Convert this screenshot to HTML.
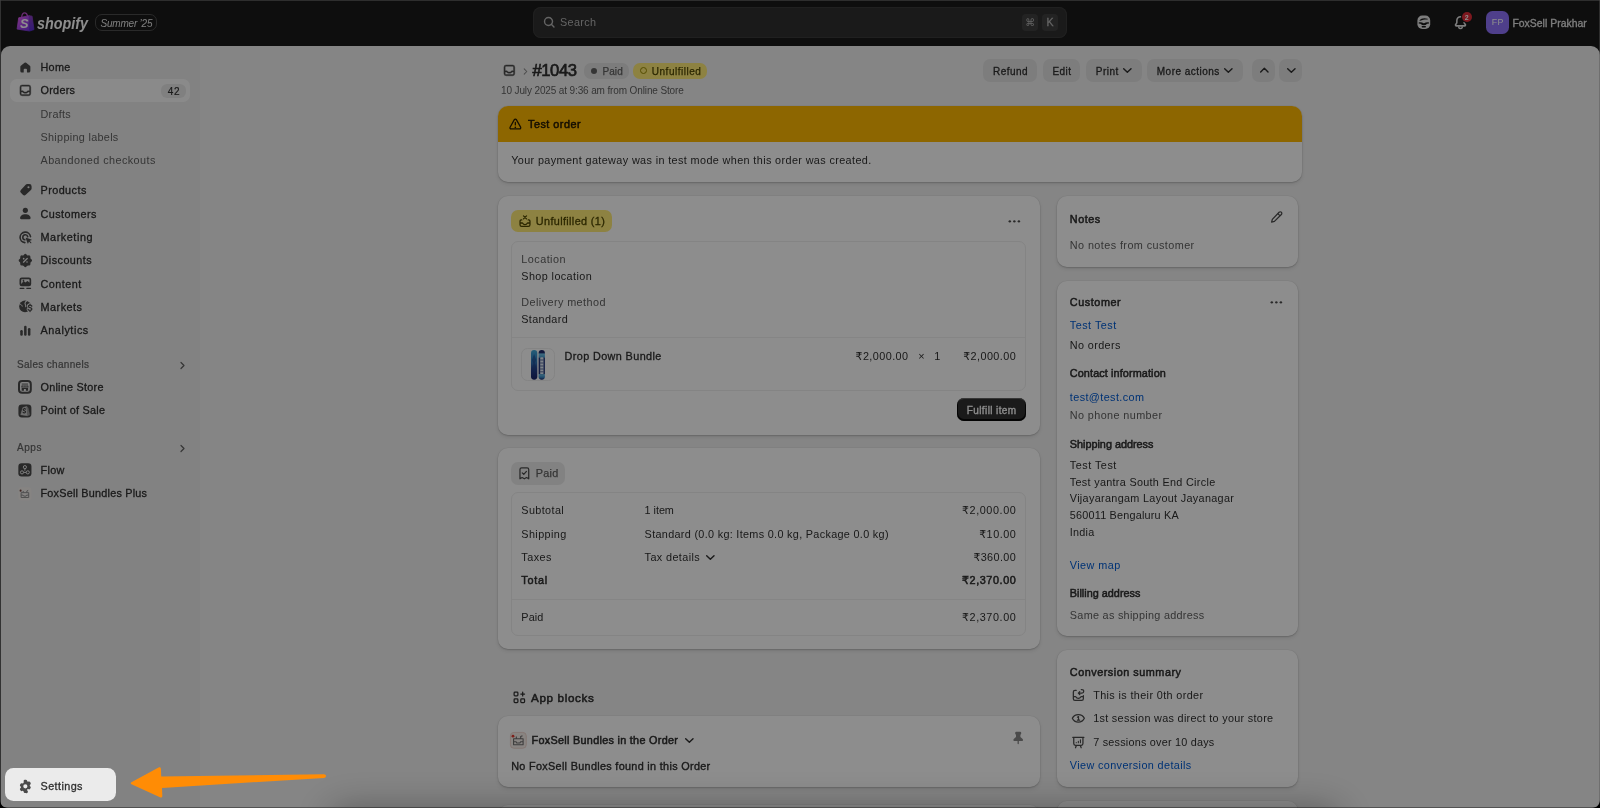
<!DOCTYPE html>
<html lang="en"><head><meta charset="utf-8"><title>Orders · #1043 · Shopify</title>
<style>
html,body{margin:0;padding:0;}
body{width:1600px;height:808px;overflow:hidden;position:relative;background:#1a1a1a;font-family:"Liberation Sans","DejaVu Sans",sans-serif;-webkit-font-smoothing:antialiased;}
.b{position:absolute;}
.ic{position:absolute;display:block;overflow:visible;}
.t{position:absolute;white-space:nowrap;line-height:1.1;}
.ov{position:absolute;left:0;top:0;width:1600px;height:808px;background:rgba(0,0,0,.447);}
#L{position:absolute;left:0;top:0;width:1600px;height:808px;will-change:transform;}
</style></head><body><div id="L">
<div class="b" style="left:0px;top:0px;width:1600px;height:47px;background:#1a1a1a;"></div>
<div class="b" style="left:1px;top:46px;width:199px;height:762px;background:#ebebeb;border-radius:9px 0 0 0;"></div>
<div class="b" style="left:200px;top:46px;width:1399.5px;height:762px;background:#f1f1f1;border-radius:0 9px 0 0;"></div>
<svg class="ic" style="left:12px;top:8px" width="28" height="28" viewBox="12 8 28 28">
<defs><linearGradient id="bg1" x1="0" y1="0" x2="1" y2="1"><stop offset="0" stop-color="#f064f8"/><stop offset=".55" stop-color="#a345ea"/><stop offset="1" stop-color="#7434e2"/></linearGradient>
<linearGradient id="bg2" x1="0" y1="0" x2="0" y2="1"><stop offset="0" stop-color="#8a3fc0"/><stop offset="1" stop-color="#5a2fd6"/></linearGradient></defs>
<path d="M21.700 17.200c.2-2.600 1.500-4.300 3-4.300 1.400 0 2.500 1.300 2.800 3.300" fill="none" stroke="#c050d0" stroke-width="1.300" stroke-linecap="round"/>
<path d="M18.700 17.800 29.300 15.700 29.600 31 17.100 29.100Z" fill="url(#bg1)" stroke="url(#bg1)" stroke-width=".800" stroke-linejoin="round"/>
<path d="M29.300 15.700 32.100 16.200 34 29.600 29.600 31Z" fill="url(#bg2)" stroke="url(#bg2)" stroke-width=".800" stroke-linejoin="round"/>
</svg>
<span class="t" style="top:17.17px;font-size:12.8px;color:#ffffff;left:19.90px;font-weight:700;font-style:italic;">S</span>
<span class="t" style="top:13.71px;font-size:16.4px;color:#ffffff;left:37.00px;font-weight:700;font-style:italic;transform:scaleX(0.8751);transform-origin:0 50%;">shopify</span>
<div class="b" style="left:95px;top:14.2px;width:61.8px;height:16.8px;border:1px solid #4c4c4c;border-radius:7px;box-sizing:border-box;"></div>
<span class="t" style="top:18.00px;font-size:10px;color:#e3e3e3;left:100.50px;font-style:italic;letter-spacing:-0.212px;">Summer ’25</span>
<div class="b" style="left:533px;top:7px;width:534px;height:30.5px;background:#303030;border-radius:8px;box-shadow:inset 0 0 0 1px #3a3a3a;"></div>
<svg class="ic" style="left:541.8px;top:14.8px;color:#b5b5b5;" width="14.5" height="14.5" viewBox="0 0 20 20" fill="#4a4a4a"><path fill="none" stroke="currentColor" stroke-width="1.950" stroke-linecap="round" d="M13.200 13.200 16.500 16.500M14.500 9A5.500 5.500 0 1 1 3.500 9a5.500 5.500 0 0 1 11 0Z"/></svg>
<span class="t" style="top:16.95px;font-size:10.83px;color:#b5b5b5;left:560.00px;letter-spacing:0.338px;">Search</span>
<div class="b" style="left:1021.6px;top:13.6px;width:16.6px;height:17px;background:#404040;border-radius:4px;"></div>
<div class="b" style="left:1041.7px;top:13.6px;width:16.6px;height:17px;background:#404040;border-radius:4px;"></div>
<span class="t" style="top:17.81px;font-size:9.8px;color:#b5b5b5;left:1025.30px;font-family:&quot;DejaVu Sans&quot;,sans-serif;">⌘</span>
<span class="t" style="top:17.37px;font-size:10.6px;color:#b5b5b5;left:1046.40px;-webkit-text-stroke:0.3px #b5b5b5;">K</span>
<svg class="ic" style="left:1414px;top:12px" width="20" height="20" viewBox="1414 12 20 20">
<rect x="1417.400" y="15.600" width="12.800" height="13.400" rx="4.800" fill="#e3e3e3"/>
<path d="M1419.600 20.300c1.200-1.800 4.600-2.700 8-1.500.4.150.3.700-.1.700-2.700-.1-4.900.3-7.300 1.300-.5.200-.9-.1-.6-.5Z" fill="#1a1a1a"/>
<path d="M1418.700 22.600c1.500-.5 3.400-.3 4.900.7h.5c1.500-1 3.400-1.200 4.900-.7v.9c-1.200 0-2.300.5-3.400 1.400h-3.500c-1.100-.9-2.200-1.400-3.400-1.400v-.9Z" fill="#1a1a1a"/>
<ellipse cx="1423.800" cy="26.700" rx="2.300" ry=".9" fill="#1a1a1a"/>
</svg>
<svg class="ic" style="left:1452px;top:14.2px;color:#e3e3e3;" width="17" height="17" viewBox="0 0 20 20" fill="#4a4a4a"><path fill="none" stroke="currentColor" stroke-width="1.850" stroke-linecap="round" stroke-linejoin="round" d="M10 3.200a4.300 4.300 0 0 0-4.300 4.300v2.300c0 .5-.17 1-.48 1.400l-.9 1.150c-.5.650-.04 1.600.78 1.600h9.800c.82 0 1.280-.95.780-1.600l-.9-1.150a2.300 2.300 0 0 1-.48-1.400V7.500A4.300 4.300 0 0 0 10 3.200ZM8 15.800c.3.800 1.100 1.300 2 1.300s1.700-.5 2-1.300"/></svg>
<div class="b" style="left:1461.5px;top:11.5px;width:10.5px;height:10.5px;background:#e22c38;border-radius:50%;box-shadow:0 0 0 1px #1a1a1a;"></div>
<span class="t" style="top:13.93px;font-size:7px;color:#fff;left:1464.70px;font-weight:700;">2</span>
<div class="b" style="left:1485.5px;top:10.8px;width:23px;height:23.4px;background:#8f72fb;border-radius:6.500px;"></div>
<span class="t" style="top:18.45px;font-size:8.8px;color:#fff;left:1491.70px;letter-spacing:0.350px;">FP</span>
<span class="t" style="top:17.68px;font-size:10.4px;color:#e3e3e3;left:1512.40px;-webkit-text-stroke:0.3px #e3e3e3;letter-spacing:0.034px;">FoxSell Prakhar</span>
<div class="b" style="left:10px;top:79px;width:179.5px;height:23.3px;background:#fafafa;border-radius:7px;"></div>
<div class="b" style="left:160.8px;top:83.8px;width:25.5px;height:14.3px;background:#e8e8e8;border-radius:6px;"></div>
<svg class="ic" style="left:16.7px;top:58.9px;color:#4a4a4a;" width="16.7" height="16.7" viewBox="0 0 20 20" fill="#4a4a4a"><path transform="translate(10 10.300) scale(.860) translate(-10 -10)" d="M8.9 3.3a1.75 1.75 0 0 1 2.2 0l5.2 4.2c.45.36.7.9.7 1.47v5.78A2.25 2.25 0 0 1 14.75 17H13a.75.75 0 0 1-.75-.75V13a1.25 1.25 0 0 0-1.25-1.25H9A1.25 1.25 0 0 0 7.75 13v3.25A.75.75 0 0 1 7 17H5.25A2.25 2.25 0 0 1 3 14.75V8.97c0-.57.26-1.11.7-1.47l5.2-4.2Z"/></svg>
<span class="t" style="top:62.45px;font-size:10.83px;color:#303030;left:40.50px;-webkit-text-stroke:0.3px #303030;letter-spacing:0.303px;">Home</span>
<svg class="ic" style="left:16.7px;top:81.9px;color:#4a4a4a;" width="16.7" height="16.7" viewBox="0 0 20 20" fill="#4a4a4a"><path fill-rule="evenodd" stroke="currentColor" stroke-width=".450" d="M3.5 6.25A2.75 2.75 0 0 1 6.25 3.5h7.5a2.75 2.75 0 0 1 2.75 2.75v7.5a2.75 2.75 0 0 1-2.75 2.75h-7.5a2.75 2.75 0 0 1-2.75-2.75v-7.5ZM6.25 5C5.56 5 5 5.56 5 6.25v4.25h1.82c.57 0 1.09.32 1.35.83l.11.22c.13.26.39.42.67.42h2.1c.28 0 .54-.16.67-.42l.11-.22c.25-.51.77-.83 1.34-.83H15V6.25C15 5.56 14.44 5 13.75 5h-7.5ZM15 12h-1.83l-.11.22a2.25 2.25 0 0 1-2.01 1.25h-2.1a2.25 2.25 0 0 1-2.01-1.25L6.83 12H5v1.75c0 .69.56 1.25 1.25 1.25h7.5c.69 0 1.25-.56 1.25-1.25V12Z"/></svg>
<span class="t" style="top:85.45px;font-size:10.83px;color:#303030;left:40.50px;-webkit-text-stroke:0.3px #303030;letter-spacing:0.281px;">Orders</span>
<span class="t" style="top:86.10px;font-size:10px;color:#303030;left:167.80px;-webkit-text-stroke:0.2px #303030;letter-spacing:0.575px;">42</span>
<span class="t" style="top:108.75px;font-size:10.83px;color:#616161;left:40.50px;letter-spacing:0.262px;">Drafts</span>
<span class="t" style="top:132.15px;font-size:10.83px;color:#616161;left:40.50px;letter-spacing:0.310px;">Shipping labels</span>
<span class="t" style="top:155.45px;font-size:10.83px;color:#616161;left:40.50px;letter-spacing:0.424px;">Abandoned checkouts</span>
<svg class="ic" style="left:16.7px;top:181.9px;color:#4a4a4a;" width="16.7" height="16.7" viewBox="0 0 20 20" fill="#4a4a4a"><path fill-rule="evenodd" d="M10.4 3.3c.47-.5 1.13-.8 1.82-.8h2.53A2.75 2.75 0 0 1 17.5 5.25v2.53c0 .69-.29 1.35-.8 1.82l-6.2 5.8a2.5 2.5 0 0 1-3.48-.06L4.66 12.98a2.5 2.5 0 0 1-.06-3.48l5.8-6.2ZM13.75 7.5a1.25 1.25 0 1 0 0-2.5 1.25 1.25 0 0 0 0 2.5Z"/></svg>
<span class="t" style="top:185.45px;font-size:10.83px;color:#303030;left:40.50px;-webkit-text-stroke:0.3px #303030;letter-spacing:0.438px;">Products</span>
<svg class="ic" style="left:16.7px;top:205.20000000000002px;color:#4a4a4a;" width="16.7" height="16.7" viewBox="0 0 20 20" fill="#4a4a4a"><circle cx="10" cy="6.400" r="3.100"/><path d="M3.700 15.700c0-2.800 2.800-4.700 6.300-4.700s6.300 1.900 6.300 4.700c0 .700-.500 1.300-1.300 1.300H5c-.800 0-1.300-.600-1.300-1.300Z"/></svg>
<span class="t" style="top:208.75px;font-size:10.83px;color:#303030;left:40.50px;-webkit-text-stroke:0.3px #303030;letter-spacing:0.455px;">Customers</span>
<svg class="ic" style="left:16.7px;top:228.6px;color:#4a4a4a;" width="16.7" height="16.7" viewBox="0 0 20 20" fill="#4a4a4a"><path fill="none" stroke="currentColor" stroke-width="1.900" stroke-linecap="round" d="M16.200 9.100A6.300 6.300 0 1 0 9.400 16.300"/><path fill="none" stroke="currentColor" stroke-width="1.900" stroke-linecap="round" d="M12.900 9.300a3 3 0 1 0-3.500 3.600"/><path d="M11.100 10.500c-.4-.150-.750.200-.6.600l2.100 6c.150.420.740.430.9.020l.860-2.060 1.900 1.900a.6.600 0 0 0 .850-.850l-1.900-1.900 2.060-.860c.410-.170.400-.750-.020-.9l-6.150-1.950Z"/></svg>
<span class="t" style="top:232.15px;font-size:10.83px;color:#303030;left:40.50px;-webkit-text-stroke:0.3px #303030;letter-spacing:0.557px;">Marketing</span>
<svg class="ic" style="left:16.7px;top:251.9px;color:#4a4a4a;" width="16.7" height="16.7" viewBox="0 0 20 20" fill="#4a4a4a"><path fill-rule="evenodd" d="M8.6 2.9a1.9 1.9 0 0 1 2.8 0l.5.55c.38.42.93.65 1.5.62l.74-.04a1.9 1.9 0 0 1 1.98 1.98l-.04.74c-.03.57.2 1.12.62 1.5l.55.5a1.9 1.9 0 0 1 0 2.8l-.55.5c-.42.38-.65.93-.62 1.5l.04.74a1.9 1.9 0 0 1-1.98 1.98l-.74-.04a1.9 1.9 0 0 0-1.5.62l-.5.55a1.9 1.9 0 0 1-2.8 0l-.5-.55a1.9 1.9 0 0 0-1.5-.62l-.74.04a1.9 1.9 0 0 1-1.98-1.98l.04-.74a1.9 1.9 0 0 0-.62-1.5l-.55-.5a1.9 1.9 0 0 1 0-2.8l.55-.5c.42-.38.65-.93.62-1.5l-.04-.74A1.9 1.9 0 0 1 5.86 4.030l.74.04c.57.03 1.12-.2 1.5-.62l.5-.55ZM8 9a1 1 0 1 0 0-2 1 1 0 0 0 0 2Zm4 4a1 1 0 1 0 0-2 1 1 0 0 0 0 2Zm.78-5.780a.75.75 0 0 1 0 1.060l-4.500 4.500a.75.75 0 0 1-1.060-1.060l4.500-4.500a.75.75 0 0 1 1.060 0Z"/></svg>
<span class="t" style="top:255.45px;font-size:10.83px;color:#303030;left:40.50px;-webkit-text-stroke:0.3px #303030;letter-spacing:0.457px;">Discounts</span>
<svg class="ic" style="left:16.7px;top:275.2px;color:#4a4a4a;" width="16.7" height="16.7" viewBox="0 0 20 20" fill="#4a4a4a"><path fill-rule="evenodd" d="M3 5.750A2.750 2.750 0 0 1 5.750 3h8.500A2.750 2.750 0 0 1 17 5.750v5A2.750 2.750 0 0 1 14.250 13.500h-8.500A2.750 2.750 0 0 1 3 10.750v-5Zm2 4.900 2.300-2.500a1.300 1.300 0 0 1 1.850-.07l1.100 1 1.300-1.400a1.300 1.300 0 0 1 1.900-.02l1.550 1.600V5.750a.75.750 0 0 0-.75-.75h-8.500a.75.750 0 0 0-.75.750v4.900Zm2.750-2.900a1 1 0 1 0 0-2 1 1 0 0 0 0 2Z"/><path d="M3.750 15.250a.75.750 0 0 0 0 1.500h4.500a.75.750 0 0 0 0-1.500h-4.500Zm8 0a.75.750 0 0 0 0 1.500h4.500a.75.750 0 0 0 0-1.500h-4.500Z"/></svg>
<span class="t" style="top:278.75px;font-size:10.83px;color:#303030;left:40.50px;-webkit-text-stroke:0.3px #303030;letter-spacing:0.477px;">Content</span>
<svg class="ic" style="left:16.7px;top:298.4px;color:#4a4a4a;" width="16.7" height="16.7" viewBox="0 0 20 20" fill="#4a4a4a"><mask id="mkm" maskUnits="userSpaceOnUse" x="0" y="0" width="20" height="20"><rect width="20" height="20" fill="#000"/><circle cx="9.600" cy="10.100" r="7" fill="#fff"/><path d="M12 3.400c-2.300 1.200-3 3-1.900 4.800.5.800.6 1.500.3 2.300" fill="none" stroke="#000" stroke-width="1.250" stroke-linecap="round"/><path d="M3.500 7.500c1.500.2 2.500 1 2.800 2.300" fill="none" stroke="#000" stroke-width="1.100" stroke-linecap="round"/><path d="M17.700 9.700c-.400-.800-1.100-1.200-2.100-1.200-1.200 0-2 .600-2 1.500s.700 1.300 2 1.600c1.400.300 2.200.700 2.200 1.700s-.900 1.600-2.200 1.600c-1 0-1.800-.400-2.200-1.200M15.600 7.400v1M15.600 15v1.200" fill="none" stroke="#000" stroke-width="3.700" stroke-linecap="round" stroke-linejoin="round"/></mask><rect width="20" height="20" mask="url(#mkm)"/><path d="M17.700 9.700c-.400-.800-1.100-1.200-2.100-1.200-1.200 0-2 .600-2 1.500s.700 1.300 2 1.600c1.400.300 2.200.700 2.200 1.700s-.900 1.600-2.200 1.600c-1 0-1.800-.400-2.200-1.200M15.600 7.400v1M15.600 15v1.200" fill="none" stroke="currentColor" stroke-width="1.600" stroke-linecap="round" stroke-linejoin="round"/></svg>
<span class="t" style="top:301.95px;font-size:10.83px;color:#303030;left:40.50px;-webkit-text-stroke:0.3px #303030;letter-spacing:0.497px;">Markets</span>
<svg class="ic" style="left:16.7px;top:321.9px;color:#4a4a4a;" width="16.7" height="16.7" viewBox="0 0 20 20" fill="#4a4a4a"><rect x="3.900" y="9.600" width="3" height="6.800" rx="1.400"/><rect x="8.500" y="4.500" width="3" height="11.900" rx="1.400"/><rect x="13.100" y="7.300" width="3" height="9.100" rx="1.400"/></svg>
<span class="t" style="top:325.45px;font-size:10.83px;color:#303030;left:40.50px;-webkit-text-stroke:0.3px #303030;letter-spacing:0.557px;">Analytics</span>
<span class="t" style="top:359.40px;font-size:10px;color:#616161;left:17.00px;-webkit-text-stroke:0.2px #616161;letter-spacing:0.321px;">Sales channels</span>
<svg class="ic" style="left:174.5px;top:357.5px;color:#616161;" width="15" height="15" viewBox="0 0 20 20" fill="#4a4a4a"><path fill="none" stroke="currentColor" stroke-width="1.6" stroke-linecap="round" stroke-linejoin="round" d="M8 6l4 4-4 4"/></svg>
<svg class="ic" style="left:18px;top:380.1px;" width="13.8" height="13.8" viewBox="0 0 20 20" fill="#4a4a4a"><rect x="1.450" y="1.450" width="17.100" height="17.100" rx="4.500" fill="none" stroke="#4a4a4a" stroke-width="2.900"/><path d="M6 5.900h8" stroke="#4a4a4a" stroke-width="1.300" stroke-linecap="round"/><path d="M5.300 7.500h9.400l.900 2.500c0 .600-.500 1-1.100 1H5.500c-.600 0-1.100-.400-1.100-1l.900-2.500Z" fill="#787878"/><path d="M8.300 7.500v3.500M11.700 7.500v3.500" stroke="#ebebeb" stroke-width=".500"/><path d="M5.300 11.300h9.400v4.200h-3.300v-2.500H8.600v2.500H5.300z" fill="#4a4a4a"/></svg>
<span class="t" style="top:381.95px;font-size:10.83px;color:#303030;left:40.50px;-webkit-text-stroke:0.3px #303030;letter-spacing:0.254px;">Online Store</span>
<svg class="ic" style="left:18px;top:403.6px;" width="13.8" height="13.8" viewBox="0 0 20 20" fill="#4a4a4a"><rect x=".600" y=".600" width="18.800" height="18.800" rx="5" fill="#4a4a4a"/><path d="M7 5.400 12.500 3.500 13.900 17 4 15.500Z" fill="#cdcdcd" stroke="#cdcdcd" stroke-width=".800" stroke-linejoin="round"/><path d="M12.500 3.500 14.600 5.400 17 15.800 13.900 17Z" fill="#9c9c9c" stroke="#9c9c9c" stroke-width=".600" stroke-linejoin="round"/><path fill="none" stroke="#3a3a3a" stroke-width="1.500" stroke-linecap="round" d="M10.900 7.500c-.500-.700-1.300-.900-2-.700-.900.200-1.400.900-1.200 1.700.200.700.900 1 1.700 1.300.900.300 1.500.700 1.500 1.600 0 .900-.800 1.500-1.800 1.500-.800 0-1.400-.300-1.800-.900"/></svg>
<span class="t" style="top:405.45px;font-size:10.83px;color:#303030;left:40.50px;-webkit-text-stroke:0.3px #303030;letter-spacing:0.258px;">Point of Sale</span>
<span class="t" style="top:442.30px;font-size:10px;color:#616161;left:17.00px;-webkit-text-stroke:0.2px #616161;letter-spacing:0.568px;">Apps</span>
<svg class="ic" style="left:174.5px;top:441px;color:#616161;" width="15" height="15" viewBox="0 0 20 20" fill="#4a4a4a"><path fill="none" stroke="currentColor" stroke-width="1.6" stroke-linecap="round" stroke-linejoin="round" d="M8 6l4 4-4 4"/></svg>
<svg class="ic" style="left:18px;top:463.40000000000003px;" width="13.8" height="13.8" viewBox="0 0 20 20" fill="#4a4a4a"><rect x=".5" y=".5" width="19" height="19" rx="4.800" fill="#4a4a4a"/><g fill="none" stroke="#ebebeb" stroke-width="1.400"><circle cx="10" cy="6" r="2.300"/><circle cx="5.800" cy="13.600" r="2.300"/><circle cx="14.200" cy="13.600" r="2.300"/><path d="M10 8.300v2.900M8.100 13.600h3.800"/></g></svg>
<span class="t" style="top:465.25px;font-size:10.83px;color:#303030;left:40.50px;-webkit-text-stroke:0.3px #303030;letter-spacing:0.308px;">Flow</span>
<svg class="ic" style="left:18px;top:486.6px;" width="13.8" height="13.8" viewBox="0 0 20 20" fill="#4a4a4a"><rect x=".500" y=".500" width="19" height="19" rx="4" fill="#f2eeec"/><path fill="none" stroke="#8c8c8c" stroke-width="1.400" stroke-linejoin="round" d="M4.500 8.200h11v7H4.500zM4.500 11.800h2.900l.8 1.400h3.600l.8-1.400h2.900M7.600 8.200V5.800M12.800 8.200V5.800l2-.9"/><circle cx="3.800" cy="5.300" r="1.500" fill="#7a4a44"/></svg>
<span class="t" style="top:488.45px;font-size:10.83px;color:#303030;left:40.50px;-webkit-text-stroke:0.3px #303030;letter-spacing:0.220px;">FoxSell Bundles Plus</span>
<svg class="ic" style="left:16.7px;top:778.0px;color:#4a4a4a;" width="16.7" height="16.7" viewBox="0 0 20 20" fill="#4a4a4a"><path fill-rule="evenodd" d="M8.010 3.140A1.400 1.400 0 0 1 9.380 2h1.240c.67 0 1.250.48 1.370 1.140l.17.900c.36.150.700.350 1.010.580l.87-.300a1.400 1.400 0 0 1 1.670.620l.62 1.080c.34.580.21 1.320-.3 1.760l-.69.590a5.300 5.300 0 0 1 0 1.170l.69.590c.51.440.64 1.180.3 1.760l-.62 1.080a1.400 1.400 0 0 1-1.670.620l-.87-.300c-.31.230-.65.430-1.010.580l-.17.900A1.400 1.400 0 0 1 10.620 18H9.380a1.400 1.400 0 0 1-1.370-1.140l-.17-.9a5.300 5.300 0 0 1-1.010-.580l-.87.300a1.400 1.400 0 0 1-1.670-.620l-.62-1.080a1.400 1.400 0 0 1 .3-1.760l.69-.590a5.300 5.300 0 0 1 0-1.170l-.69-.590a1.400 1.400 0 0 1-.3-1.760l.62-1.080a1.400 1.400 0 0 1 1.670-.620l.87.300c.31-.230.650-.430 1.010-.580l.17-.900ZM10 12.500a2.500 2.500 0 1 0 0-5 2.500 2.500 0 0 0 0 5Z"/></svg>
<span class="t" style="top:781.25px;font-size:10.83px;color:#303030;left:40.50px;-webkit-text-stroke:0.3px #303030;letter-spacing:0.408px;">Settings</span>
<svg class="ic" style="left:500.5px;top:62.2px;color:#4a4a4a;" width="16.7" height="16.7" viewBox="0 0 20 20" fill="#4a4a4a"><path fill-rule="evenodd" stroke="currentColor" stroke-width=".450" d="M3.5 6.25A2.75 2.75 0 0 1 6.25 3.5h7.5a2.75 2.75 0 0 1 2.75 2.75v7.5a2.75 2.75 0 0 1-2.75 2.75h-7.5a2.75 2.75 0 0 1-2.75-2.75v-7.5ZM6.25 5C5.56 5 5 5.56 5 6.25v4.25h1.82c.57 0 1.09.32 1.35.83l.11.22c.13.26.39.42.67.42h2.1c.28 0 .54-.16.67-.42l.11-.22c.25-.51.77-.83 1.34-.83H15V6.25C15 5.56 14.44 5 13.75 5h-7.5ZM15 12h-1.83l-.11.22a2.25 2.25 0 0 1-2.01 1.25h-2.1a2.25 2.25 0 0 1-2.01-1.25L6.83 12H5v1.75c0 .69.56 1.25 1.25 1.25h7.5c.69 0 1.25-.56 1.25-1.25V12Z"/></svg>
<svg class="ic" style="left:518.5px;top:64.5px;color:#8a8a8a;" width="13" height="13" viewBox="0 0 20 20" fill="#4a4a4a"><path fill="none" stroke="currentColor" stroke-width="1.6" stroke-linecap="round" stroke-linejoin="round" d="M8 6l4 4-4 4"/></svg>
<span class="t" style="top:62.26px;font-size:16.67px;color:#303030;left:532.50px;-webkit-text-stroke:0.65px #303030;letter-spacing:-0.457px;">#1043</span>
<div class="b" style="left:584px;top:62.5px;width:45.3px;height:16.5px;background:#e0e0e0;border-radius:7px;"></div>
<div class="b" style="left:590.5px;top:67.5px;width:6.5px;height:6.5px;background:#616161;border-radius:50%;"></div>
<span class="t" style="top:66.20px;font-size:10px;color:#616161;left:602.50px;-webkit-text-stroke:0.25px #616161;letter-spacing:0.061px;">Paid</span>
<div class="b" style="left:633.3px;top:62.5px;width:74.2px;height:16.5px;background:#ffeb78;border-radius:7px;"></div>
<div class="b" style="left:639.5px;top:67.3px;width:7px;height:7px;border:1.600px solid #998a00;border-radius:50%;box-sizing:border-box;"></div>
<span class="t" style="top:66.20px;font-size:10px;color:#4f4700;left:651.80px;-webkit-text-stroke:0.25px #4f4700;letter-spacing:0.508px;">Unfulfilled</span>
<span class="t" style="top:85.20px;font-size:10px;color:#616161;left:501.00px;letter-spacing:-0.127px;">10 July 2025 at 9:36 am from Online Store</span>
<div class="b" style="left:983px;top:59px;width:54px;height:23px;background:#e3e3e3;border-radius:7px;"></div>
<span class="t" style="top:65.80px;font-size:10px;color:#303030;left:993.00px;-webkit-text-stroke:0.3px #303030;letter-spacing:0.450px;">Refund</span>
<div class="b" style="left:1042.8px;top:59px;width:37.700000000000045px;height:23px;background:#e3e3e3;border-radius:7px;"></div>
<span class="t" style="top:65.80px;font-size:10px;color:#303030;left:1052.50px;-webkit-text-stroke:0.3px #303030;letter-spacing:0.422px;">Edit</span>
<div class="b" style="left:1086px;top:59px;width:55.5px;height:23px;background:#e3e3e3;border-radius:7px;"></div>
<span class="t" style="top:65.80px;font-size:10px;color:#303030;left:1095.80px;-webkit-text-stroke:0.3px #303030;letter-spacing:0.484px;">Print</span>
<svg class="ic" style="left:1119px;top:62.3px;color:#303030;" width="16.7" height="16.7" viewBox="0 0 20 20" fill="#4a4a4a"><path fill="none" stroke="currentColor" stroke-width="1.700" stroke-linecap="round" stroke-linejoin="round" d="M5.600 8l4.400 4.400L14.400 8"/></svg>
<div class="b" style="left:1147px;top:59px;width:95.79999999999995px;height:23px;background:#e3e3e3;border-radius:7px;"></div>
<span class="t" style="top:65.80px;font-size:10px;color:#303030;left:1156.80px;-webkit-text-stroke:0.3px #303030;letter-spacing:0.477px;">More actions</span>
<svg class="ic" style="left:1220.4px;top:62.3px;color:#303030;" width="16.7" height="16.7" viewBox="0 0 20 20" fill="#4a4a4a"><path fill="none" stroke="currentColor" stroke-width="1.700" stroke-linecap="round" stroke-linejoin="round" d="M5.600 8l4.400 4.400L14.400 8"/></svg>
<div class="b" style="left:1252.3px;top:59px;width:23.0px;height:23px;background:#e3e3e3;border-radius:7px;"></div>
<svg class="ic" style="left:1255.5px;top:62px;color:#303030;" width="16.7" height="16.7" viewBox="0 0 20 20" fill="#4a4a4a"><path fill="none" stroke="currentColor" stroke-width="1.700" stroke-linecap="round" stroke-linejoin="round" d="M5.600 12l4.400-4.400L14.400 12"/></svg>
<div class="b" style="left:1279.3px;top:59px;width:23.100000000000136px;height:23px;background:#e3e3e3;border-radius:7px;"></div>
<svg class="ic" style="left:1282.5px;top:62.3px;color:#303030;" width="16.7" height="16.7" viewBox="0 0 20 20" fill="#4a4a4a"><path fill="none" stroke="currentColor" stroke-width="1.700" stroke-linecap="round" stroke-linejoin="round" d="M5.600 8l4.400 4.400L14.400 8"/></svg>
<div class="b" style="left:498px;top:105.8px;width:804.4px;height:76.4px;background:#fff;border-radius:10px;overflow:hidden;box-shadow:0 0 0 .500px rgba(0,0,0,.05),0 1px 1.500px rgba(0,0,0,.14),0 2px 5px rgba(0,0,0,.09);"></div>
<div class="b" style="left:498px;top:105.8px;width:804.4px;height:36.3px;background:#ffb800;border-radius:10px 10px 0 0;"></div>
<svg class="ic" style="left:507.3px;top:115.7px;color:#251a00;" width="16.7" height="16.7" viewBox="0 0 20 20" fill="#251a00"><path fill="none" stroke="currentColor" stroke-width="1.5" stroke-linejoin="round" d="M10 3.600c.5 0 .95.260 1.200.700l5.100 9.100c.5.900-.15 2.100-1.200 2.100H4.900c-1.050 0-1.700-1.200-1.200-2.100l5.100-9.100c.25-.44.700-.70 1.200-.70Z"/><path d="M10 7a.75.75 0 0 1 .75.75v3a.75.750 0 0 1-1.500 0v-3A.75.750 0 0 1 10 7Zm0 5.500a1 1 0 1 1 0 2 1 1 0 0 1 0-2Z"/></svg>
<span class="t" style="top:119.15px;font-size:10.83px;color:#251a00;left:528.00px;-webkit-text-stroke:0.5px #251a00;letter-spacing:0.483px;">Test order</span>
<span class="t" style="top:155.45px;font-size:10.83px;color:#303030;left:511.20px;letter-spacing:0.378px;">Your payment gateway was in test mode when this order was created.</span>
<div class="b" style="left:498px;top:196px;width:542px;height:239px;background:#fff;border-radius:10px;box-shadow:0 0 0 .500px rgba(0,0,0,.05),0 1px 1.500px rgba(0,0,0,.14),0 2px 5px rgba(0,0,0,.09);"></div>
<div class="b" style="left:510.8px;top:209.5px;width:100.8px;height:22.5px;background:#ffeb78;border-radius:7px;"></div>
<svg class="ic" style="left:516.5px;top:212.6px;color:#4f4700;" width="16" height="16" viewBox="0 0 20 20" fill="#4a4a4a"><path fill="none" stroke="currentColor" stroke-width="1.600" stroke-linecap="round" stroke-linejoin="round" d="M6 8.700H5.200a1.400 1.400 0 0 0-1.400 1.400v4.500a2 2 0 0 0 2 2h8.400a2 2 0 0 0 2-2v-4.500a1.400 1.400 0 0 0-1.400-1.400H14M4 12.500h2.600c.3 0 .5.200.6.400.4 1 1.300 1.600 2.800 1.600s2.400-.6 2.800-1.600c.1-.2.300-.4.600-.4H16M8.100 3.600l3.800 3.800m0-3.800-3.800 3.800"/></svg>
<span class="t" style="top:215.75px;font-size:10.83px;color:#4f4700;left:535.80px;-webkit-text-stroke:0.3px #4f4700;letter-spacing:0.372px;">Unfulfilled (1)</span>
<svg class="ic" style="left:1006.15px;top:212.55px;" width="16.7" height="16.7" viewBox="0 0 20 20" fill="#4a4a4a"><circle cx="4.550" cy="10" r="1.450"/><circle cx="10" cy="10" r="1.450"/><circle cx="15.450" cy="10" r="1.450"/></svg>
<div class="b" style="left:511.2px;top:241px;width:515px;height:150px;border:1px solid #eeeeee;border-radius:7px;box-sizing:border-box;"></div>
<div class="b" style="left:512px;top:337px;width:513.4px;height:1px;background:#f0f0f0;"></div>
<span class="t" style="top:253.95px;font-size:10.83px;color:#616161;left:521.30px;letter-spacing:0.464px;">Location</span>
<span class="t" style="top:270.65px;font-size:10.83px;color:#303030;left:521.30px;letter-spacing:0.398px;">Shop location</span>
<span class="t" style="top:297.45px;font-size:10.83px;color:#616161;left:521.30px;letter-spacing:0.419px;">Delivery method</span>
<span class="t" style="top:314.15px;font-size:10.83px;color:#303030;left:521.30px;letter-spacing:0.350px;">Standard</span>
<div class="b" style="left:521.4px;top:348px;width:33.4px;height:33.2px;background:#fff;border:1px solid #eeeeee;border-radius:6.500px;box-sizing:border-box;"></div>
<svg class="ic" style="left:521px;top:347px" width="35" height="35" viewBox="521 347 35 35">
<defs><linearGradient id="sb1" x1="0" y1="0" x2="0" y2="1"><stop offset="0" stop-color="#43a9da"/><stop offset=".35" stop-color="#2f7fc0"/><stop offset=".65" stop-color="#24408c"/><stop offset="1" stop-color="#1b2568"/></linearGradient>
<linearGradient id="sb2" x1="0" y1="0" x2="0" y2="1"><stop offset="0" stop-color="#1c2868"/><stop offset=".1" stop-color="#1f2d70"/><stop offset=".13" stop-color="#74c4e8"/><stop offset=".24" stop-color="#4a9fd2"/><stop offset=".28" stop-color="#22357a"/><stop offset=".8" stop-color="#22357a"/><stop offset=".83" stop-color="#69bce4"/><stop offset=".92" stop-color="#3a88c4"/><stop offset="1" stop-color="#1b2568"/></linearGradient></defs>
<rect x="531" y="350" width="6.300" height="29.700" rx="3.150" fill="url(#sb1)"/>
<path d="M534.100 354l2.200 6-1.600 3 1.800 5-2.400 5-2.200-5 1.600-4-1.600-4Z" fill="#1d3f86" opacity=".55"/>
<rect x="538.600" y="350" width="6.300" height="29.700" rx="3.150" fill="url(#sb2)"/>
<rect x="540.200" y="357.300" width="3.300" height="16.800" rx=".6" fill="#e4eef7"/>
<path d="M540.200 360h3.300M540.200 363h3.300M540.200 366h3.300M540.200 369h3.300M540.200 371.800h3.300" stroke="#22357a" stroke-width=".7"/>
</svg>
<span class="t" style="top:351.15px;font-size:10.83px;color:#303030;left:564.50px;-webkit-text-stroke:0.3px #303030;letter-spacing:0.394px;">Drop Down Bundle</span>
<span class="t" style="top:351.15px;font-size:10.83px;color:#303030;left:855.60px;letter-spacing:0.432px;">₹2,000.00</span>
<span class="t" style="top:351.15px;font-size:10.83px;color:#303030;left:918.30px;">×</span>
<span class="t" style="top:351.15px;font-size:10.83px;color:#303030;left:934.30px;">1</span>
<span class="t" style="top:351.15px;font-size:10.83px;color:#303030;left:963.20px;letter-spacing:0.444px;">₹2,000.00</span>
<div class="b" style="left:957px;top:398.2px;width:69.3px;height:23.2px;background:#303030;border-radius:7px;box-shadow:inset 0 -1px 0 1px rgba(0,0,0,.8),inset 0 1px 0 rgba(255,255,255,.25);"></div>
<span class="t" style="top:405.30px;font-size:10px;color:#fff;left:966.80px;-webkit-text-stroke:0.3px #fff;letter-spacing:0.389px;">Fulfill item</span>
<div class="b" style="left:498px;top:448.2px;width:542px;height:201px;background:#fff;border-radius:10px;box-shadow:0 0 0 .500px rgba(0,0,0,.05),0 1px 1.500px rgba(0,0,0,.14),0 2px 5px rgba(0,0,0,.09);"></div>
<div class="b" style="left:510.8px;top:462px;width:54.4px;height:22.6px;background:#ececec;border-radius:7px;"></div>
<svg class="ic" style="left:515.8px;top:464.8px;color:#4a4a4a;" width="16.7" height="16.7" viewBox="0 0 20 20" fill="#4a4a4a"><path fill="none" stroke="currentColor" stroke-width="1.500" stroke-linejoin="round" stroke-linecap="round" d="M4.750 5.500a2 2 0 0 1 2-2h6.500a2 2 0 0 1 2 2v11l-2.600-1.500-2.650 1.500-2.650-1.500-2.600 1.500v-11ZM7.500 9.500l1.800 1.800 3.200-3.600"/></svg>
<span class="t" style="top:468.15px;font-size:10.83px;color:#616161;left:535.80px;-webkit-text-stroke:0.25px #616161;letter-spacing:0.271px;">Paid</span>
<div class="b" style="left:511.2px;top:491.9px;width:515px;height:144px;border:1px solid #eeeeee;border-radius:7px;box-sizing:border-box;"></div>
<div class="b" style="left:512px;top:598.5px;width:513.4px;height:1px;background:#f0f0f0;"></div>
<span class="t" style="top:505.05px;font-size:10.83px;color:#303030;left:521.30px;letter-spacing:0.381px;">Subtotal</span>
<span class="t" style="top:505.05px;font-size:10.83px;color:#303030;left:644.60px;letter-spacing:-0.040px;">1 item</span>
<span class="t" style="top:505.05px;font-size:10.83px;color:#303030;left:962.10px;letter-spacing:0.582px;">₹2,000.00</span>
<span class="t" style="top:528.65px;font-size:10.83px;color:#303030;left:521.30px;letter-spacing:0.406px;">Shipping</span>
<span class="t" style="top:528.65px;font-size:10.83px;color:#303030;left:644.60px;letter-spacing:0.317px;">Standard (0.0 kg: Items 0.0 kg, Package 0.0 kg)</span>
<span class="t" style="top:528.65px;font-size:10.83px;color:#303030;left:979.20px;letter-spacing:0.520px;">₹10.00</span>
<span class="t" style="top:552.15px;font-size:10.83px;color:#303030;left:521.30px;letter-spacing:0.451px;">Taxes</span>
<span class="t" style="top:552.15px;font-size:10.83px;color:#303030;left:644.60px;letter-spacing:0.393px;">Tax details</span>
<svg class="ic" style="left:702.2px;top:549.2px;color:#303030;" width="16.7" height="16.7" viewBox="0 0 20 20" fill="#4a4a4a"><path fill="none" stroke="currentColor" stroke-width="1.700" stroke-linecap="round" stroke-linejoin="round" d="M5.600 8l4.400 4.400L14.400 8"/></svg>
<span class="t" style="top:552.15px;font-size:10.83px;color:#303030;left:973.40px;letter-spacing:0.397px;">₹360.00</span>
<span class="t" style="top:575.05px;font-size:10.83px;color:#303030;left:521.30px;-webkit-text-stroke:0.5px #303030;letter-spacing:0.731px;">Total</span>
<span class="t" style="top:575.05px;font-size:10.83px;color:#303030;left:962.10px;-webkit-text-stroke:0.5px #303030;letter-spacing:0.582px;">₹2,370.00</span>
<span class="t" style="top:612.35px;font-size:10.83px;color:#303030;left:521.30px;letter-spacing:0.138px;">Paid</span>
<span class="t" style="top:612.35px;font-size:10.83px;color:#303030;left:962.10px;letter-spacing:0.582px;">₹2,370.00</span>
<svg class="ic" style="left:510.8px;top:689.4px;color:#303030;" width="16.7" height="16.7" viewBox="0 0 20 20" fill="#4a4a4a"><path fill="none" stroke="currentColor" stroke-width="1.500" stroke-linejoin="round" stroke-linecap="round" d="M3.750 4.750a1 1 0 0 1 1-1h2.500a1 1 0 0 1 1 1v2.500a1 1 0 0 1-1 1h-2.500a1 1 0 0 1-1-1v-2.500ZM3.750 12.750a1 1 0 0 1 1-1h2.500a1 1 0 0 1 1 1v2.500a1 1 0 0 1-1 1h-2.500a1 1 0 0 1-1-1v-2.500ZM11.750 12.750a1 1 0 0 1 1-1h2.500a1 1 0 0 1 1 1v2.500a1 1 0 0 1-1 1h-2.500a1 1 0 0 1-1-1v-2.500ZM14 3.750v4.500M11.750 6h4.500"/></svg>
<span class="t" style="top:692.39px;font-size:11.67px;color:#303030;left:531.10px;-webkit-text-stroke:0.5px #303030;letter-spacing:0.630px;">App blocks</span>
<div class="b" style="left:498px;top:716.3px;width:542px;height:71.2px;background:#fff;border-radius:10px;box-shadow:0 0 0 .500px rgba(0,0,0,.05),0 1px 1.500px rgba(0,0,0,.14),0 2px 5px rgba(0,0,0,.09);"></div>
<svg class="ic" style="left:509.5px;top:731.6px;" width="16.7" height="16.7" viewBox="0 0 20 20" fill="#4a4a4a"><rect x=".500" y=".500" width="19" height="19" rx="4.200" fill="#f6eeea" stroke="#eccfc6" stroke-width="1"/><path fill="none" stroke="#6e6e6e" stroke-width="1.300" stroke-linejoin="round" d="M4.300 8h11.400v7.300H4.300zM4.300 11.700h3l.8 1.500h3.800l.8-1.500h3M7.600 8V5.500M12.800 8V5.500l2.200-1"/><circle cx="3.600" cy="5" r="1.700" fill="#e23b30"/></svg>
<span class="t" style="top:735.35px;font-size:10.83px;color:#303030;left:531.50px;-webkit-text-stroke:0.5px #303030;letter-spacing:0.295px;">FoxSell Bundles in the Order</span>
<svg class="ic" style="left:680.9px;top:732.3px;color:#303030;" width="16.7" height="16.7" viewBox="0 0 20 20" fill="#4a4a4a"><path fill="none" stroke="currentColor" stroke-width="1.700" stroke-linecap="round" stroke-linejoin="round" d="M5.600 8l4.400 4.400L14.400 8"/></svg>
<svg class="ic" style="left:1008px;top:728px" width="20" height="20" viewBox="1008 728 20 20"><path d="M1015.200 732.800a1 1 0 0 1 1-1h4a1 1 0 0 1 1 1v.800c0 .400-.200.700-.500.900l-.300.300v2.300l2 1.600c.400.300.600.700.600 1.200v.300c0 .400-.300.700-.700.700h-3.450v2.600a.650.650 0 0 1-1.300 0v-2.600h-3.450a.700.700 0 0 1-.700-.700v-.300c0-.500.200-.900.600-1.200l2-1.600v-2.300l-.300-.300a1.100 1.100 0 0 1-.500-.900v-.800Z" fill="#878787"/></svg>
<span class="t" style="top:761.35px;font-size:10.83px;color:#303030;left:511.20px;-webkit-text-stroke:0.35px #303030;letter-spacing:0.319px;">No FoxSell Bundles found in this Order</span>
<div class="b" style="left:498px;top:805px;width:542px;height:20px;background:#fff;border-radius:10px;box-shadow:0 0 0 .500px rgba(0,0,0,.05),0 1px 1.500px rgba(0,0,0,.14),0 2px 5px rgba(0,0,0,.09);"></div>
<div class="b" style="left:1056.7px;top:196px;width:241.5px;height:70.8px;background:#fff;border-radius:10px;box-shadow:0 0 0 .500px rgba(0,0,0,.05),0 1px 1.500px rgba(0,0,0,.14),0 2px 5px rgba(0,0,0,.09);"></div>
<span class="t" style="top:214.45px;font-size:10.83px;color:#303030;left:1069.80px;-webkit-text-stroke:0.5px #303030;letter-spacing:0.551px;">Notes</span>
<svg class="ic" style="left:1268.2px;top:209.2px;color:#4a4a4a;" width="16.7" height="16.7" viewBox="0 0 20 20" fill="#4a4a4a"><path fill="none" stroke="currentColor" stroke-width="1.500" stroke-linejoin="round" stroke-linecap="round" d="M13.300 3.900a1.900 1.900 0 0 1 2.700 2.700l-8.300 8.300-3.400.900.900-3.400 8.100-8.500ZM11.800 5.500l2.700 2.700"/></svg>
<span class="t" style="top:240.05px;font-size:10.83px;color:#616161;left:1069.80px;letter-spacing:0.422px;">No notes from customer</span>
<div class="b" style="left:1056.7px;top:280.6px;width:241.5px;height:355.4px;background:#fff;border-radius:10px;box-shadow:0 0 0 .500px rgba(0,0,0,.05),0 1px 1.500px rgba(0,0,0,.14),0 2px 5px rgba(0,0,0,.09);"></div>
<span class="t" style="top:296.95px;font-size:10.83px;color:#303030;left:1069.80px;-webkit-text-stroke:0.5px #303030;letter-spacing:0.566px;">Customer</span>
<svg class="ic" style="left:1268.2px;top:293.7px;" width="16.7" height="16.7" viewBox="0 0 20 20" fill="#4a4a4a"><circle cx="4.550" cy="10" r="1.450"/><circle cx="10" cy="10" r="1.450"/><circle cx="15.450" cy="10" r="1.450"/></svg>
<span class="t" style="top:319.85px;font-size:10.83px;color:#005bd3;left:1069.80px;letter-spacing:0.484px;">Test Test</span>
<span class="t" style="top:339.95px;font-size:10.83px;color:#303030;left:1069.80px;letter-spacing:0.382px;">No orders</span>
<span class="t" style="top:368.35px;font-size:10.83px;color:#303030;left:1069.80px;-webkit-text-stroke:0.5px #303030;letter-spacing:0.117px;">Contact information</span>
<span class="t" style="top:391.55px;font-size:10.83px;color:#005bd3;left:1069.80px;letter-spacing:0.402px;">test@test.com</span>
<span class="t" style="top:410.25px;font-size:10.83px;color:#616161;left:1069.80px;letter-spacing:0.394px;">No phone number</span>
<span class="t" style="top:438.55px;font-size:10.83px;color:#303030;left:1069.80px;-webkit-text-stroke:0.5px #303030;letter-spacing:-0.006px;">Shipping address</span>
<span class="t" style="top:460.05px;font-size:10.83px;color:#303030;left:1069.80px;letter-spacing:0.496px;">Test Test</span>
<span class="t" style="top:476.75px;font-size:10.83px;color:#303030;left:1069.80px;letter-spacing:0.302px;">Test yantra South End Circle</span>
<span class="t" style="top:493.35px;font-size:10.83px;color:#303030;left:1069.80px;letter-spacing:0.321px;">Vijayarangam Layout Jayanagar</span>
<span class="t" style="top:509.95px;font-size:10.83px;color:#303030;left:1069.80px;letter-spacing:0.207px;">560011 Bengaluru KA</span>
<span class="t" style="top:526.55px;font-size:10.83px;color:#303030;left:1069.80px;letter-spacing:0.254px;">India</span>
<span class="t" style="top:559.85px;font-size:10.83px;color:#005bd3;left:1069.80px;letter-spacing:0.434px;">View map</span>
<span class="t" style="top:588.35px;font-size:10.83px;color:#303030;left:1069.80px;-webkit-text-stroke:0.5px #303030;letter-spacing:0.013px;">Billing address</span>
<span class="t" style="top:610.05px;font-size:10.83px;color:#616161;left:1069.80px;letter-spacing:0.295px;">Same as shipping address</span>
<div class="b" style="left:1056.7px;top:650.3px;width:241.5px;height:136.5px;background:#fff;border-radius:10px;box-shadow:0 0 0 .500px rgba(0,0,0,.05),0 1px 1.500px rgba(0,0,0,.14),0 2px 5px rgba(0,0,0,.09);"></div>
<span class="t" style="top:666.95px;font-size:10.83px;color:#303030;left:1069.80px;-webkit-text-stroke:0.5px #303030;letter-spacing:0.524px;">Conversion summary</span>
<svg class="ic" style="left:1069.8px;top:686.8px;color:#4a4a4a;" width="16.7" height="16.7" viewBox="0 0 20 20" fill="#4a4a4a"><path fill="none" stroke="currentColor" stroke-width="1.500" stroke-linecap="round" stroke-linejoin="round" d="M7.500 4H6a2 2 0 0 0-2 2v8a2 2 0 0 0 2 2h8a2 2 0 0 0 2-2v-3.800M4.200 11.500h2.300c.300 0 .500.200.700.500.400.900 1.300 1.500 2.800 1.500s2.400-.600 2.800-1.500c.200-.300.400-.500.700-.500h2.300M10 7.300h4.300a2.150 2.150 0 0 0 0-4.300h-.800M11.700 5.500 10 7.300l1.700 1.700"/></svg>
<span class="t" style="top:690.05px;font-size:10.83px;color:#303030;left:1093.20px;letter-spacing:0.372px;">This is their 0th order</span>
<svg class="ic" style="left:1069.8px;top:709.9px;color:#4a4a4a;" width="16.7" height="16.7" viewBox="0 0 20 20" fill="#4a4a4a"><path fill="none" stroke="currentColor" stroke-width="1.500" stroke-linecap="round" stroke-linejoin="round" d="M2.800 10c1.300-2.900 4-4.600 7.200-4.600s5.900 1.700 7.200 4.600c-1.300 2.900-4 4.600-7.200 4.600S4.100 12.900 2.800 10Z"/><path fill="none" stroke="currentColor" stroke-width="1.400" stroke-linecap="round" stroke-linejoin="round" d="M8.900 8.600l1.300-.800v4.300M8.800 12.200h2.800"/></svg>
<span class="t" style="top:713.15px;font-size:10.83px;color:#303030;left:1093.20px;letter-spacing:0.308px;">1st session was direct to your store</span>
<svg class="ic" style="left:1069.8px;top:733.7px;color:#4a4a4a;" width="16.7" height="16.7" viewBox="0 0 20 20" fill="#4a4a4a"><path fill="none" stroke="currentColor" stroke-width="1.500" stroke-linecap="round" stroke-linejoin="round" d="M3.300 4h13.400M4.500 4v7.500a2 2 0 0 0 2 2h7a2 2 0 0 0 2-2V4M7.600 13.700l-1 2.800M12.400 13.700l1 2.800"/><path fill="none" stroke="currentColor" stroke-width="1.300" stroke-linecap="round" d="M7.500 10.500v-.300M10 10.500V8.700M12.500 10.500V7"/></svg>
<span class="t" style="top:736.95px;font-size:10.83px;color:#303030;left:1093.20px;letter-spacing:0.224px;">7 sessions over 10 days</span>
<span class="t" style="top:760.05px;font-size:10.83px;color:#005bd3;left:1069.80px;letter-spacing:0.383px;">View conversion details</span>
<div class="b" style="left:1056.7px;top:800.5px;width:241.5px;height:20px;background:#fff;border-radius:10px;box-shadow:0 0 0 .500px rgba(0,0,0,.05),0 1px 1.500px rgba(0,0,0,.14),0 2px 5px rgba(0,0,0,.09);"></div>
<div class="ov"></div>
<div class="b" style="left:330px;top:809px;width:1010px;height:30px;box-shadow:0 0 36px 3px rgba(0,0,0,.30);border-radius:20px;"></div>
<div class="b" style="left:5px;top:768.3px;width:111px;height:32.4px;background:#ebebeb;border-radius:8.500px;"></div>
<svg class="ic" style="left:16.7px;top:778.0px;color:#4a4a4a;" width="16.7" height="16.7" viewBox="0 0 20 20" fill="#4a4a4a"><path fill-rule="evenodd" d="M8.010 3.140A1.400 1.400 0 0 1 9.380 2h1.240c.67 0 1.250.48 1.370 1.140l.17.900c.36.150.700.350 1.010.580l.87-.300a1.400 1.400 0 0 1 1.670.620l.62 1.080c.34.580.21 1.320-.3 1.760l-.69.590a5.300 5.300 0 0 1 0 1.170l.69.590c.51.440.64 1.180.3 1.760l-.62 1.080a1.400 1.400 0 0 1-1.670.620l-.87-.300c-.31.230-.65.430-1.010.580l-.17.900A1.400 1.400 0 0 1 10.620 18H9.380a1.400 1.400 0 0 1-1.370-1.140l-.17-.9a5.300 5.300 0 0 1-1.010-.580l-.87.300a1.400 1.400 0 0 1-1.670-.620l-.62-1.080a1.400 1.400 0 0 1 .3-1.760l.69-.590a5.300 5.300 0 0 1 0-1.170l-.69-.590a1.400 1.400 0 0 1-.3-1.760l.62-1.080a1.400 1.400 0 0 1 1.670-.620l.87.300c.31-.230.650-.430 1.010-.580l.17-.900ZM10 12.500a2.500 2.500 0 1 0 0-5 2.500 2.500 0 0 0 0 5Z"/></svg>
<span class="t" style="top:781.25px;font-size:10.83px;color:#303030;left:40.50px;-webkit-text-stroke:0.3px #303030;letter-spacing:0.408px;">Settings</span>
<svg class="ic" style="left:120px;top:760px" width="220" height="46" viewBox="120 760 220 46">
<path d="M131.400 782.300c-.900.500-.900 1.500.100 2L160 797.300c1.300.600 2.300 0 2.300-1.300L162 787.900 323.900 777.900c1.200-.100 2.100-.900 2.100-1.900s-.900-1.800-2.100-1.800L161.200 776.600 160.900 768.900c0-1.400-1.100-2-2.300-1.400Z" fill="#ff8c05"/>
</svg>
<div class="b" style="left:0px;top:0px;width:1600px;height:1px;background:#2e2e2e;"></div>
<div class="b" style="left:0px;top:0px;width:1px;height:808px;background:rgba(63,63,63,.74);"></div>
<div class="b" style="left:1599px;top:0px;width:1px;height:808px;background:rgba(81,81,81,.45);"></div>
<div class="b" style="left:0px;top:806.5px;width:1600px;height:1.5px;background:rgba(0,0,0,.38);"></div>
<svg class="ic" style="left:0;top:800px" width="8" height="8" viewBox="0 0 8 8"><path d="M0 0v8h8C3.600 8 0 4.400 0 0Z" fill="#000"/></svg>
<svg class="ic" style="left:1592px;top:800px" width="8" height="8" viewBox="0 0 8 8"><path d="M8 0v8H0c4.400 0 8-3.600 8-8Z" fill="#000"/></svg>
</div></body></html>
